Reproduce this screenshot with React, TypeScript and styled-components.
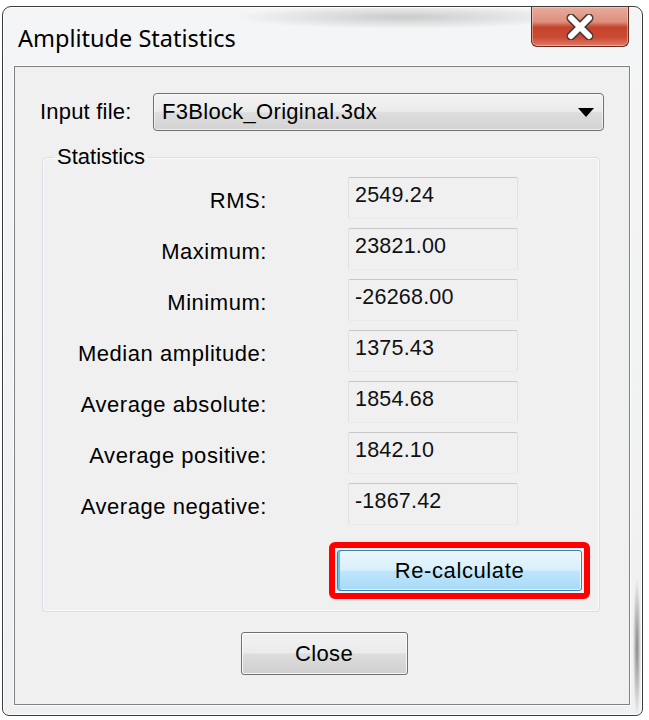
import React from 'react';
import styled, { createGlobalStyle } from 'styled-components';

const GlobalStyle = createGlobalStyle`
    html, body {
        margin: 0;
        padding: 0;
        background: #ffffff;
    }
    body {
        font-family: "Liberation Sans", Arial, sans-serif;
    }
`;

const Page = styled.div`
    width: 649px;
    height: 720px;
    box-sizing: border-box;
    padding: 6px 6px 4px 2px;
    display: flex;
`;

const Window = styled.div`
    flex: 1;
    display: flex;
    flex-direction: column;
    border: 1px solid #3c3c3c;
    border-radius: 9px 9px 7px 7px;
    box-shadow: inset 0 0 0 1px rgba(255, 255, 255, 0.85);
    background:
        radial-gradient(ellipse 170px 12px at 400px 10px, rgba(150, 150, 150, 0.45), transparent),
        radial-gradient(ellipse 4px 70px at 634px 640px, rgba(90, 90, 90, 0.7), transparent),
        linear-gradient(#f4f5f6, #eef0f1);
`;

const TitleBar = styled.div`
    height: 59px;
    display: flex;
    align-items: flex-start;
    padding-left: 15px;
    padding-right: 13px;
`;

const Title = styled.div`
    flex: 1;
    align-self: center;
    padding-top: 3px;
    font-family: "Noto Sans", "Open Sans", sans-serif;
    font-size: 23.5px;
    color: #000;
`;

const CaptionClose = styled.div`
    width: 98px;
    height: 40px;
    box-sizing: border-box;
    border: 1px solid #6b2a20;
    border-top: none;
    border-radius: 0 0 6px 6px;
    display: flex;
    align-items: center;
    justify-content: center;
    background: linear-gradient(
        #e9ac9c 0%,
        #dd8f7c 38%,
        #c5432b 52%,
        #cb4a33 78%,
        #e27a68 100%
    );
    box-shadow: inset 0 0 0 1px rgba(255, 220, 210, 0.45);
`;

const Client = styled.div`
    flex: 1;
    display: flex;
    flex-direction: column;
    margin: 0 12px 10px 11px;
    padding: 26px 25px 28px 25px;
    background: #f0f0f0;
    border: 1px solid #7f8080;
    box-shadow: 0 0 0 1px rgba(255, 255, 255, 0.8);
`;

const FileRow = styled.div`
    display: flex;
    align-items: center;
`;

const FileLabel = styled.label`
    width: 113px;
    flex: none;
    font-size: 22px;
    letter-spacing: 0.2px;
    color: #000;
`;

const Combo = styled.div`
    flex: 1;
    height: 38px;
    box-sizing: border-box;
    display: flex;
    align-items: center;
    justify-content: space-between;
    padding: 0 9px 0 8px;
    border: 1px solid #707070;
    border-radius: 4px;
    background: linear-gradient(#f3f3f3 0%, #ebebeb 48%, #dddddd 52%, #d3d3d3 100%);
    box-shadow: inset 0 0 0 1px rgba(255, 255, 255, 0.6);
    font-size: 22px;
    letter-spacing: 0.3px;
    color: #000;
`;

const Group = styled.fieldset`
    margin: 14px 4px 0 2px;
    padding: 8px 0 12px 0;
    min-width: 0;
    border: 1px solid #d5dfe5;
    border-radius: 4px;
    box-shadow: inset 0 0 0 1px rgba(255, 255, 255, 0.7);
`;

const Legend = styled.legend`
    margin-left: 11px;
    padding: 0 3px;
    font-size: 22px;
    line-height: 24px;
    color: #000;
`;

const StatGrid = styled.div`
    display: grid;
    grid-template-columns: 225px 170px;
    column-gap: 80px;
    row-gap: 9px;
`;

const StatLabel = styled.div`
    justify-self: end;
    align-self: center;
    padding-top: 6px;
    margin-right: 1px;
    font-size: 22px;
    letter-spacing: 0.55px;
    color: #000;
`;

const StatValue = styled.div`
    height: 42px;
    box-sizing: border-box;
    padding: 4px 6px 0;
    border: 1px solid;
    border-color: #c5c7c9 #dfe2e5 #e8eaec #dfe2e5;
    border-radius: 2px;
    font-size: 21.5px;
    line-height: 26px;
    letter-spacing: 0.2px;
    color: #111;
`;

const ActionRow = styled.div`
    display: flex;
    justify-content: flex-end;
    margin: 17px 9px 0 0;
`;

const Highlight = styled.div`
    padding: 2px;
    border: 6px solid #ff0000;
    border-radius: 6px;
    display: flex;
`;

const Button = styled.button<{ $hot?: boolean; $w: number; $h: number }>`
    width: ${p => p.$w}px;
    height: ${p => p.$h}px;
    padding: 0;
    font-family: "Liberation Sans", Arial, sans-serif;
    font-size: 22px;
    letter-spacing: ${p => (p.$hot ? '0.6px' : '0.4px')};
    color: #000;
    border: 1px solid ${p => (p.$hot ? '#3c7fb1' : '#707070')};
    border-radius: 3px;
    box-shadow: ${p =>
        p.$hot
            ? 'inset 2px 0 0 #5ec3ef, inset 0 0 0 1px rgba(255,255,255,0.7)'
            : 'inset 0 0 0 1px rgba(255,255,255,0.8)'};
    background: ${p =>
        p.$hot
            ? 'linear-gradient(#eaf6fd 0%, #d9f0fc 48%, #bee6fd 52%, #a7d9f5 100%)'
            : 'linear-gradient(#f2f2f2 0%, #ebebeb 48%, #dddddd 52%, #cfcfcf 100%)'};
`;

const CloseRow = styled.div`
    display: flex;
    justify-content: center;
    margin-top: 20px;
    padding-left: 4px;
`;

const stats = [
    { label: 'RMS:', value: '2549.24' },
    { label: 'Maximum:', value: '23821.00' },
    { label: 'Minimum:', value: '-26268.00' },
    { label: 'Median amplitude:', value: '1375.43' },
    { label: 'Average absolute:', value: '1854.68' },
    { label: 'Average positive:', value: '1842.10' },
    { label: 'Average negative:', value: '-1867.42' },
];

const CloseGlyph = () => (
    <svg width="32" height="26" viewBox="0 0 32 26">
        <path d="M7 4 L25 22 M25 4 L7 22" stroke="#4a3a38" strokeWidth="9" strokeLinecap="round" />
        <path d="M7 4 L25 22 M25 4 L7 22" stroke="#ffffff" strokeWidth="6" strokeLinecap="round" />
    </svg>
);

const DropArrow = () => (
    <svg width="16" height="9" viewBox="0 0 16 9">
        <polygon points="0,0 16,0 8,9" fill="#000" />
    </svg>
);

const App = () => {
    return (
        <Page>
            <GlobalStyle />
            <Window>
                <TitleBar>
                    <Title>Amplitude Statistics</Title>
                    <CaptionClose>
                        <CloseGlyph />
                    </CaptionClose>
                </TitleBar>

                <Client>
                    <FileRow>
                        <FileLabel>Input file:</FileLabel>
                        <Combo>
                            <span>F3Block_Original.3dx</span>
                            <DropArrow />
                        </Combo>
                    </FileRow>

                    <Group>
                        <Legend>Statistics</Legend>
                        <StatGrid>
                            {stats.map(s => (
                                <React.Fragment key={s.label}>
                                    <StatLabel>{s.label}</StatLabel>
                                    <StatValue>{s.value}</StatValue>
                                </React.Fragment>
                            ))}
                        </StatGrid>
                        <ActionRow>
                            <Highlight>
                                <Button $hot $w={245} $h={41}>Re-calculate</Button>
                            </Highlight>
                        </ActionRow>
                    </Group>

                    <CloseRow>
                        <Button $w={167} $h={43}>Close</Button>
                    </CloseRow>
                </Client>
            </Window>
        </Page>
    );
};

export default App;
